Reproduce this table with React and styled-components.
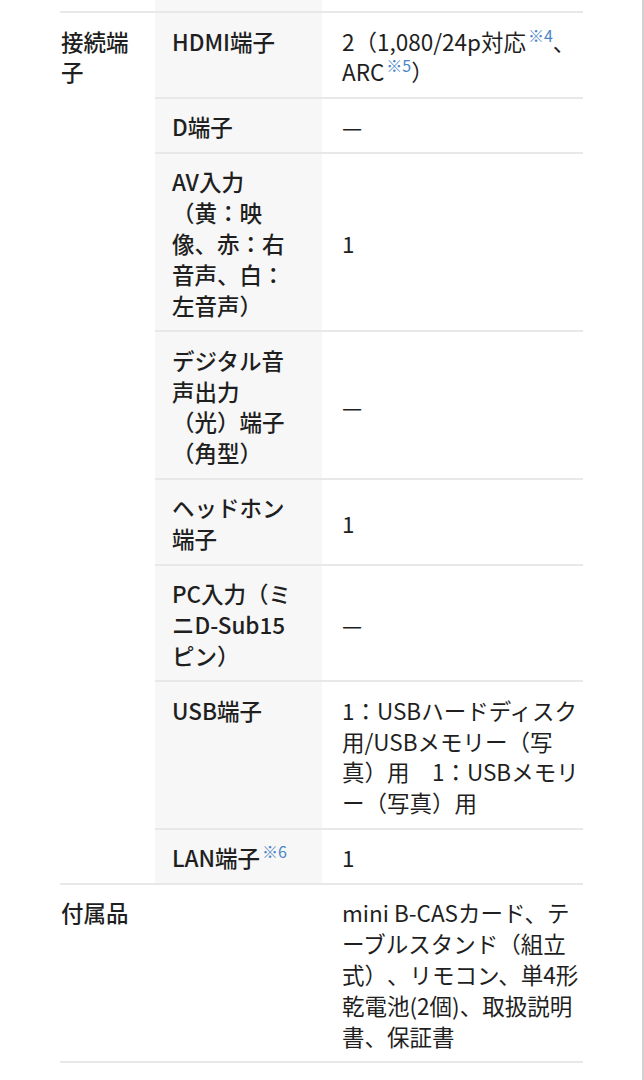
import React from 'react';
import styled, { createGlobalStyle } from 'styled-components';

const GlobalStyle = createGlobalStyle`
  html, body {
    margin: 0;
    padding: 0;
    background: #ffffff;
  }
  body {
    font-family: "Noto Sans CJK JP", "Noto Sans", sans-serif;
    color: #1f1f1f;
  }
`;

const Note = ({ children }) => <NoteMark>※{children}</NoteMark>;

const ports = [
  {
    label: 'HDMI端子',
    value: (
      <>
        2（1,080/24p対応<Note>4</Note>、ARC<Note>5</Note>）
      </>
    ),
  },
  { label: 'D端子', value: '—' },
  { label: 'AV入力（黄：映像、赤：右音声、白：左音声）', value: '1' },
  { label: 'デジタル音声出力（光）端子（角型）', value: '—' },
  { label: 'ヘッドホン端子', value: '1' },
  { label: 'PC入力（ミニD-Sub15ピン）', value: '—' },
  {
    label: 'USB端子',
    value: '1：USBハードディスク用/USBメモリー（写真）用　1：USBメモリー（写真）用',
  },
  {
    label: (
      <>
        LAN端子<Note>6</Note>
      </>
    ),
    value: '1',
  },
];

const App = () => {
  return (
    <Page>
      <GlobalStyle />
      <SpecTable>
        <colgroup>
          <col style={{ width: 95 }} />
          <col style={{ width: 167 }} />
          <col style={{ width: 261 }} />
        </colgroup>
        <tbody>
          <StubRow>
            <td />
            <td className="sub" />
            <td />
          </StubRow>
          {ports.map((row, i) => (
            <tr key={i}>
              {i === 0 && (
                <GroupHead rowSpan={ports.length}>接続端子</GroupHead>
              )}
              <SubHead>{row.label}</SubHead>
              <Value>{row.value}</Value>
            </tr>
          ))}
          <tr>
            <GroupHead colSpan={2}>付属品</GroupHead>
            <Value $top>
              mini B-CASカード、テーブルスタンド（組立式）、リモコン、単4形乾電池(2個)、取扱説明書、保証書
            </Value>
          </tr>
        </tbody>
      </SpecTable>
    </Page>
  );
};

export default App;

const Page = styled.div`
  box-sizing: border-box;
  width: 644px;
  min-height: 1080px;
  border-right: 2px solid #d2d2d2;
  padding-left: 60px;
`;

const SpecTable = styled.table`
  width: 523px;
  table-layout: fixed;
  border-collapse: collapse;
  font-size: 22.5px;
  line-height: 30.8px;
  font-weight: 400;
  text-spacing-trim: space-all;

  th,
  td {
    padding: 12.5px 0 9.8px;
    border-bottom: 2px solid #e8e8e8;
    text-align: left;
  }
`;

const StubRow = styled.tr`
  td {
    height: 11px;
    padding: 0;
  }
  .sub {
    background: #f7f7f7;
  }
`;

const GroupHead = styled.th`
  vertical-align: top;
  font-weight: 500;
  padding-left: 1px !important;
  padding-right: 14px !important;
`;

const SubHead = styled.th`
  vertical-align: top;
  font-weight: 500;
  background: #f7f7f7;
  padding-left: 17px !important;
  padding-right: 30px !important;
`;

const Value = styled.td`
  vertical-align: ${(p) => (p.$top ? 'top' : 'middle')};
  padding-left: 20px !important;
  padding-right: 0;
`;

const NoteMark = styled.span`
  color: #4b85c6;
  font-size: 16px;
  font-weight: 400;
  line-height: 0;
  vertical-align: 9px;
  margin-left: 2px;
`;
